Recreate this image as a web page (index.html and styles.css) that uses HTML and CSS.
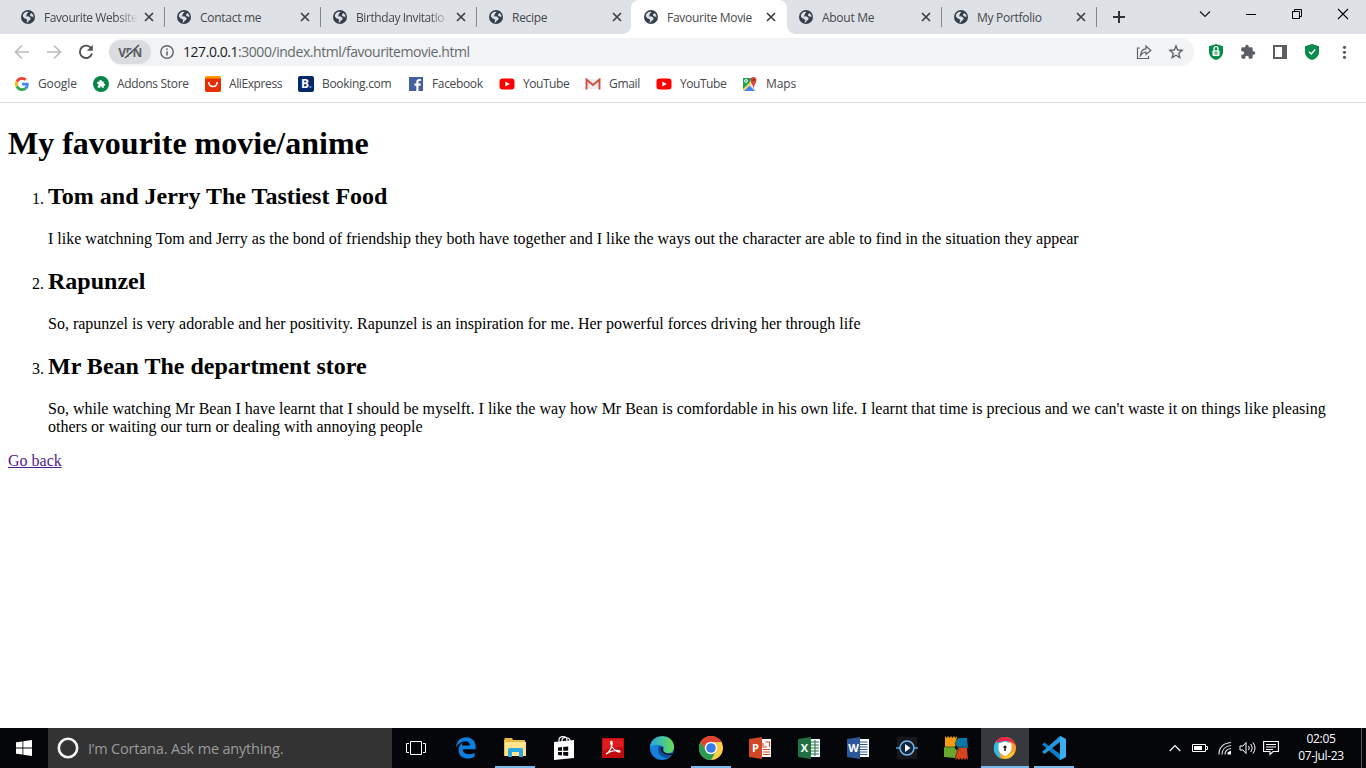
FILE: index.html
```html
<!DOCTYPE html>
<html lang="en">
<head>
<meta charset="utf-8">
<title>Favourite Movie</title>
<link rel="stylesheet" href="styles.css">
</head>
<body>
<svg class="defs" width="0" height="0">
  <symbol id="globe" viewBox="0 0 14 14"><circle cx="7" cy="7" r="7" fill="#353e4b"/><path d="M1.800 6.200C2 4 3.500 2.300 5.700 1.800L7.600 2 5.800 3.700 5.600 5.200 4.600 6.200 7.700 6.600 9.600 8 9.300 9.700 7.700 10.800 6.700 12.600 5.300 12.300 6.300 10.500 5.300 9 3.300 8.300Z" fill="#dee1e6"/><path d="M8.800 4.700 10.600 2.900 12.300 5.200 12.400 7.600 11.200 6.600 9.600 6.300Z" fill="#dee1e6"/></symbol>
  <symbol id="close" viewBox="0 0 10 10"><path d="M1 1l8 8M9 1 1 9" stroke="#3c4043" stroke-width="1.7" fill="none"/></symbol>
  <symbol id="youtube" viewBox="0 0 16 12"><rect x=".5" y=".5" width="15" height="11" rx="3" fill="#f00"/><path d="M6.300 3.500v5L10.800 6Z" fill="#fff"/></symbol>
</svg>
<div class="desktop">
  <header class="browser">
    <div class="tabs">
      <div class="tab sep"><svg class="fav"><use href="#globe"/></svg><span class="title fade">Favourite Website</span><svg class="x"><use href="#close"/></svg></div>
      <div class="tab sep"><svg class="fav"><use href="#globe"/></svg><span class="title">Contact me</span><svg class="x"><use href="#close"/></svg></div>
      <div class="tab sep"><svg class="fav"><use href="#globe"/></svg><span class="title fade">Birthday Invitatio</span><svg class="x"><use href="#close"/></svg></div>
      <div class="tab before-active"><svg class="fav"><use href="#globe"/></svg><span class="title">Recipe</span><svg class="x"><use href="#close"/></svg></div>
      <div class="tab active"><svg class="fav"><use href="#globe"/></svg><span class="title">Favourite Movie</span><svg class="x"><use href="#close"/></svg></div>
      <div class="tab sep narrow"><svg class="fav"><use href="#globe"/></svg><span class="title">About Me</span><svg class="x"><use href="#close"/></svg></div>
      <div class="tab sep narrow"><svg class="fav"><use href="#globe"/></svg><span class="title">My Portfolio</span><svg class="x"><use href="#close"/></svg></div>
      <svg class="plus" width="12" height="12"><path d="M6 0v12M0 6h12" stroke="#303236" stroke-width="2"/></svg>
      <div class="window">
        <svg width="46" height="28"><path d="M18 11.500l5 5 5-5" fill="none" stroke="#111" stroke-width="1.100"/></svg>
        <svg width="46" height="28"><path d="M18 14.500h10" stroke="#000"/></svg>
        <svg width="46" height="28"><path d="M18.500 11.500h7v7h-7zM20.500 11.500v-2h7v7h-2" fill="none" stroke="#000"/></svg>
        <svg width="46" height="28"><path d="M18 9l10 10M28 9 18 19" stroke="#000" stroke-width="1.1"/></svg>
      </div>
    </div>
    <div class="toolbar">
      <svg width="16" height="16" viewBox="0 0 16 16"><path d="M15 8H2M8 1.500 1.500 8 8 14.500" fill="none" stroke="#babcbe" stroke-width="1.7"/></svg>
      <svg width="16" height="16" viewBox="0 0 16 16"><path d="M1 8h13M8 1.500 14.500 8 8 14.500" fill="none" stroke="#babcbe" stroke-width="1.7"/></svg>
      <svg width="16" height="16" viewBox="0 0 16 16"><path d="M13.300 4.500A6.200 6.200 0 1 0 14 9.600" fill="none" stroke="#505357" stroke-width="1.9"/><path d="M14.800.8v6H8.900Z" fill="#505357"/></svg>
      <div class="omni">
        <div class="vpn"><span>VPN</span><svg width="20" height="16"><path d="M4 12.500 16.500 1" stroke="#dadce0" stroke-width="2"/><path d="M4 14 18 1" stroke="#4b4e52" stroke-width="1.500"/></svg></div>
        <svg class="info" width="14" height="14"><circle cx="7" cy="7" r="6.200" fill="none" stroke="#5f6368" stroke-width="1.400"/><path d="M7 6.200v4.300M7 3.500v1.500" stroke="#5f6368" stroke-width="1.500"/></svg>
        <span class="url"><b>127.0.0.1</b>:3000/index.html/favouritemovie.html</span>
        <svg class="share" width="16" height="16"><path d="M4 4H1.500v10.500h11V12" fill="none" stroke="#5f6368" stroke-width="1.200"/><path d="M4.500 11.500C4.800 7.200 7 5.100 10 4.900V2.200l4.800 4.300L10 10.500V8C7.500 8 6 9.200 4.500 11.500Z" fill="none" stroke="#5f6368" stroke-width="1.200"/></svg>
        <svg width="16" height="16" viewBox="0 0 16 16"><path d="M8 2l1.700 4 4.400.4-3.300 2.900 1 4.200L8 11.200l-3.800 2.300 1-4.200L1.900 6.400 6.300 6Z" fill="none" stroke="#5f6368" stroke-width="1.400"/></svg>
      </div>
      <div class="exts">
        <svg width="16" height="16" viewBox="0 0 16 16"><path d="M8 0 15 2.200V8c0 4-3 6.600-7 8-4-1.400-7-4-7-8V2.200Z" fill="#078b4b"/><rect x="4.500" y="6.300" width="7" height="5.700" rx="1" fill="#fff"/><path d="M6 6.500V4.700a2 2 0 0 1 4 0v1.800" fill="none" stroke="#fff" stroke-width="1.300"/><path d="M6.500 8.300h3M6.500 10h3" stroke="#078b4b"/></svg>
        <svg width="16" height="16" viewBox="0 0 24 24"><path d="M20.500 11H19V7a2 2 0 0 0-2-2h-4V3.500a2.500 2.500 0 0 0-5 0V5H4a2 2 0 0 0-2 2v3.800h1.500a2.700 2.700 0 0 1 0 5.400H2V20a2 2 0 0 0 2 2h3.800v-1.500a2.700 2.700 0 0 1 5.400 0V22H17a2 2 0 0 0 2-2v-4h1.500a2.500 2.500 0 0 0 0-5Z" fill="#5a5d61"/></svg>
        <svg width="16" height="16"><path d="M1 1h14v14H1zM3 3v10h7V3Z" fill="#5a5d61" fill-rule="evenodd"/></svg>
        <svg width="16" height="16" viewBox="0 0 16 16"><path d="M8 0 15 2.200V8c0 4-3 6.600-7 8-4-1.400-7-4-7-8V2.200Z" fill="#078b4b"/><path d="M5 7.700 7.300 10 11.200 5.500" fill="none" stroke="#fff" stroke-width="1.400"/></svg>
        <svg width="16" height="16"><g fill="#5a5d61"><circle cx="8.500" cy="3.300" r="1.600"/><circle cx="8.500" cy="8.300" r="1.600"/><circle cx="8.500" cy="13.300" r="1.600"/></g></svg>
      </div>
    </div>
    <nav class="bookmarks">
      <span class="bm google"><svg width="14" height="14" viewBox="0 0 48 48"><path d="M24 9.500c3.500 0 6.700 1.200 9.200 3.600l6.900-6.900C35.900 2.400 30.500 0 24 0 14.600 0 6.500 5.400 2.600 13.200l8 6.200C12.400 13.700 17.700 9.500 24 9.500" fill="#ea4335"/><path d="M47 24.500c0-1.600-.2-3.100-.4-4.500H24v9h13c-.6 3-2.300 5.500-4.800 7.200l7.700 6C44.400 38 47 31.800 47 24.500" fill="#4285f4"/><path d="M10.500 28.600a14.500 14.500 0 0 1 0-9.200l-8-6.200a24 24 0 0 0 0 21.600Z" fill="#fbbc05"/><path d="M24 48c6.500 0 11.900-2.100 15.900-5.800l-7.700-6c-2.200 1.500-4.900 2.300-8.200 2.300-6.300 0-11.600-4.200-13.500-9.900l-8 6.200C6.500 42.600 14.600 48 24 48" fill="#34a853"/></svg><span>Google</span></span>
      <span class="bm addons"><svg width="16" height="16"><circle cx="8" cy="8" r="8" fill="#078548"/><path d="M4.300 5.800h2.200c-.8-2 2.300-2.600 2.300-.5l2 .5v2c2-.6 2 2.300 0 2v2H8.900c.1-1.800-1.900-1.800-1.800 0H4.800V9.500c1.300-.2 1.300-1.800-.5-1.600Z" fill="#fff"/></svg><span>Addons Store</span></span>
      <span class="bm ali"><svg width="16" height="16"><rect width="16" height="16" rx="2" fill="#ff9900"/><path d="M0 2.500h16V14q0 2-2 2H2q-2 0-2-2Z" fill="#e62e04"/><path d="M3.700 6c.4 6 8.200 6 8.600 0" fill="none" stroke="#fff" stroke-width="1.500"/></svg><span>AliExpress</span></span>
      <span class="bm booking"><i class="b-icon">B<em>.</em></i><span>Booking.com</span></span>
      <span class="bm facebook"><svg width="14" height="14"><path d="M0 0h14v14H0Z" fill="#4460a0"/><path d="M7.300 14V8.700H5.500V6.500h1.800V5c0-2 1.200-3 3-3h1.600v2h-1.100C9.700 4 9.500 4.500 9.500 5.200v1.300h2.300l-.3 2.200h-2V14Z" fill="#fff"/></svg><span>Facebook</span></span>
      <span class="bm yt1"><svg width="16" height="12"><use href="#youtube"/></svg><span>YouTube</span></span>
      <span class="bm gmail"><svg width="16" height="12"><path d="M2 1h12v10H2Z" fill="#eee"/><path d="M1.500 11.500V1.500L8 7l6.500-5.500v10" fill="none" stroke="#d54b3d" stroke-width="1.900"/></svg><span>Gmail</span></span>
      <span class="bm yt2"><svg width="16" height="12"><use href="#youtube"/></svg><span>YouTube</span></span>
      <span class="bm maps"><svg width="16" height="16"><path d="M1 2h12v13H1Z" fill="#e3e3df"/><path d="M1 2h9L7 8 1 14Z" fill="#1fa15b"/><path d="M2 15 7.500 9.500 13 15Z" fill="#4285f4"/><path d="M1 13 10 4l1 2-9.500 9Z" fill="#ffd64f"/><path d="M11.500 12C11 8.500 8.500 7 8.500 4a3 3 0 0 1 6 0c0 3-2.500 4.500-3 8" fill="#db4437"/><circle cx="11.500" cy="4" r="1" fill="#7b231e"/><circle cx="4" cy="5" r="1.400" fill="none" stroke="#fff"/></svg><span>Maps</span></span>
    </nav>
  </header>
  <main class="page">
    <h1>My favourite movie/anime</h1>
    <ol>
      <li><h2>Tom and Jerry The Tastiest Food</h2><p>I like watchning Tom and Jerry as the bond of friendship they both have together and I like the ways out the character are able to find in the situation they appear</p></li>
      <li><h2>Rapunzel</h2><p>So, rapunzel is very adorable and her positivity. Rapunzel is an inspiration for me. Her powerful forces driving her through life</p></li>
      <li><h2>Mr Bean The department store</h2><p>So, while watching Mr Bean I have learnt that I should be myselft. I like the way how Mr Bean is comfordable in his own life. I learnt that time is precious and we can't waste it on things like pleasing<br>others or waiting our turn or dealing with annoying people</p></li>
    </ol>
    <a href="#">Go back</a>
  </main>
  <footer class="taskbar">
    <div class="start"><svg width="16" height="16"><path d="M0 2.300 6.500 1.400v6.100H0ZM7.300 1.200 16 0v7.500H7.300ZM0 8.400h6.500v6.200L0 13.700ZM7.300 8.400H16V16l-8.700-1.200Z" fill="#fff"/></svg></div>
    <div class="cortana"><svg width="22" height="22"><circle cx="11" cy="11" r="9.200" fill="none" stroke="#f2f2f2" stroke-width="2.600"/></svg><span>I’m Cortana. Ask me anything.</span></div>
    <div class="apps">
      <div class="app view"><svg width="20" height="14"><path d="M4.500.5h11v13h-11zM3 2.500H.5v9H3M17 2.500h2.500v9H17" fill="none" stroke="#fff"/></svg></div>
      <div class="app"><svg width="20" height="22"><path d="M0 10C.7 4 4.700.3 10.200.3c6 0 9.500 4.300 9.500 9.700v2.300H6.600c.3 5.500 7.800 6 12 3.400v4.100c-5.500 3.400-16 2.400-16-6.800 0-3.800 2.200-6.600 5.500-7.800-2 1-1.800 1.900-2 3.300h7.800c.2-6.400-9.300-5.600-13.900 1.500" fill="#0b80e0"/></svg></div>
      <div class="app open"><svg width="22" height="20"><path d="M1 0h7l1 2h12v16H0V2Z" fill="#e9b949"/><path d="M1 4h21v14H1Z" fill="#ffe391"/><path d="M4 19v-7q0-2 2-2h11q2 0 2 2v7h-4v-5H8v5Z" fill="#2ba8e0"/></svg></div>
      <div class="app"><svg width="22" height="24"><path d="M1 6 21 4v18L1 24Z" fill="#fff"/><path d="M6 9V4c0-4 8-5 8 0v3M9 9V4c0-4 8-3 8 1" fill="none" stroke="#fff" stroke-width="1.200"/><path d="M5 11.500l4-.4v3.700H5zM10.200 11l5-.5v4.300h-5zM5 16h4v3.500l-4-.4zM10.200 16h5v4.100l-5-.5z" fill="#080a0e"/></svg></div>
      <div class="app"><svg class="pdf" width="22" height="20"><path d="M0 0h22v20H0Z" fill="#c20b0f"/><path d="M1 1h20v8Q10 8 1 13Z" fill="#e01b1b"/><path d="M4 16c3-1 7-8 6-12-1-2-3 1 1 6 3 4 7 5 7 3.500S11 11 4 16Z" fill="none" stroke="#fff" stroke-width="1.200"/></svg></div>
      <div class="app"><svg width="24" height="24"><defs><linearGradient id="eg" x1="0" y1="0" x2="1" y2="0"><stop stop-color="#25a9e6"/><stop offset="1" stop-color="#68dd4b"/></linearGradient></defs><circle cx="12" cy="12" r="12" fill="#1680dc"/><path d="M0 11C1-2 22-4 24 10c.5 4-2 7-6 7-3 0-5-1-4-3 2-4-7-8-14-3" fill="url(#eg)"/><path d="M9 10c-3 5 1 12 8 12l5-4c-5 2-10-.5-9-5 0-2-1-3-4-3" fill="#10519b"/><path d="M13.500 10.500C10.500 15 15 18.500 22.500 17.300L24 15v4l-2 0C16 20 9 16 11 11.500Z" fill="#07101b"/></svg></div>
      <div class="app open"><svg width="24" height="24"><circle cx="12" cy="12" r="12" fill="#ffcd42"/><path d="M1.600 6A12 12 0 0 1 22.400 6H12a6 6 0 0 0-5.200 9Z" fill="#e34133"/><path d="M1.600 6A12 12 0 0 0 12 24l5.200-9A6 6 0 0 1 6.800 15Z" fill="#269b54"/><circle cx="12" cy="12" r="6.200" fill="#fff"/><circle cx="12" cy="12" r="4.800" fill="#377ce9"/></svg></div>
      <div class="app"><i class="office ppt"><b>P</b><svg width="9" height="18"><path d="M0 0h9v18H0Z" fill="#fff"/><path d="M1 4v4h4M3.500 3h4v5M1 10.500h7M1 13h7M1 15.500h7" fill="none" stroke="#d24726" stroke-width="1.100"/></svg></i></div>
      <div class="app"><i class="office xls"><b>X</b><svg width="9" height="18"><path d="M0 0h9v18H0Z" fill="#fff"/><path d="M0 3h8M0 6h8M0 9h8M0 12h8M0 15h8M4 1v16" stroke="#207245"/></svg></i></div>
      <div class="app"><i class="office doc"><b>W</b><svg width="9" height="18"><path d="M0 0h9v18H0Z" fill="#fff"/><path d="M0 3h7.500M0 5.500h7.500M0 8h7.500M0 10.500h7.500M0 13h7.500M0 15.500h7.500" stroke="#2b579a"/></svg></i></div>
      <div class="app"><svg width="24" height="24"><path d="M2 1h20v22H2Z" fill="#15171b"/><path d="M1 12h22" stroke="#5b9fe0" stroke-width="1.500"/><circle cx="12" cy="12" r="7" fill="#10243c" stroke="#77b9ed" stroke-width="1.500"/><path d="M10 8v8l5.500-4Z" fill="#fff"/></svg></div>
      <div class="app"><svg width="24" height="24"><path d="M1 0l1.500 2L4 0l1.500 2L7 0l1.500 2L10 0l1.500 2L13 0v7l-3 5-9-1Z" fill="#f59a12"/><path d="M14 2l9 0 1 10-10 0-3-4Z" fill="#0878a9"/><path d="M0 11h10l4 5-3 6-11-1Z" fill="#66a72c"/><path d="M14 12h9l1 12-1.500-2-1.500 2-1.500-2-1.500 2-1.500-2-1.500 2-1.500-2-2 2V18Z" fill="#d7431e"/><path d="M13 2 11 8l4 4-4 10M0 11h24" fill="none" stroke="#31401e" stroke-width=".7"/></svg></div>
      <div class="app open current"><svg width="24" height="24"><circle cx="12" cy="12" r="11" fill="#fb9e29"/><path d="M4 5C-2 11 1 20 8 22.500L5 12l12-6C13 2 8 2 4 5" fill="#33b9ea"/><path d="M4 4C9-1 20 0 23 10 20 6 14 3 4 7Z" fill="#ea244e"/><path d="M8 22c6 2 12 0 14-7l-7 4Z" fill="#ffc52c"/><path d="M12 5.500 18.500 7.500v4.500c0 4-3 6.500-6.500 8-3.500-1.500-6.500-4-6.500-8V7.500Z" fill="#fff"/><circle cx="12" cy="11" r="1.600" fill="#222"/><path d="M12 11v4" stroke="#222" stroke-width="1.500"/></svg></div>
      <div class="app open code"><svg width="24" height="24"><path d="M18 0 24 3v18l-6 3L0 8.500 2.500 6.500 18 18Z" fill="#087fc6"/><path d="M18 0v6L2.500 18 0 16Z" fill="#2498dc"/><path d="M18 0 24 3v18l-6 3Z" fill="#3aafee"/></svg></div>
    </div>
    <div class="tray">
      <svg width="12" height="8"><path d="M.7 7 6 1.500 11.300 7" fill="none" stroke="#fff" stroke-width="1.200"/></svg>
      <svg class="battery" width="16" height="10"><path d="M.5 1.500h13v7H.5zM14 3.500h1.500v3H14" fill="none" stroke="#fff"/><path d="M2 3h8v4H2Z" fill="#fff"/></svg>
      <svg class="wifi" width="14" height="14"><path d="M1 13.500C1 6 5.500 2.200 13 1.500M4 13.500C4 8.500 7.500 5 13 4.500M7 13.500c0-3 2-5.500 6-6" fill="none" stroke="#ddd" stroke-width="1.200"/><path d="M9.500 13.500v-2l3.500-2v4Z" fill="#fff"/></svg>
      <svg class="volume" width="18" height="14"><path d="M1 5h3l3-3.500v11L4 9H1Z" fill="none" stroke="#fff"/><path d="M9.500 5q1.500 2 0 4M11.800 3q3 4 0 8M14 1.500q4 5.500 0 11" fill="none" stroke="#fff"/></svg>
      <svg class="notes" width="16" height="16"><path d="M.6 1.500h14.800v10H10l-3 3v-3H.6ZM3 4.500h10M3 7h10M3 9.500h7" fill="none" stroke="#fff" stroke-width="1.100"/></svg>
      <div class="clock"><span>02:05</span><span>07-Jul-23</span></div>
    </div>
  </footer>
</div>
</body>
</html>
```

FILE: styles.css
```css
* { box-sizing: border-box; }
body { margin: 0; overflow: hidden; }
.defs { position: absolute; }
svg { display: block; flex: none; }
.desktop { width: 1366px; height: 768px; display: flex; flex-direction: column; background: #fff; }
.browser { height: 103px; flex: none; border-bottom: 1px solid #d8dade; font: 12px "Open Sans", "Noto Sans", sans-serif; color: #45484c; }
.tabs { height: 34px; display: flex; background: #dee1e6; padding-left: 9px; }
.tab { width: 156px; flex: none; height: 34px; display: flex; align-items: center; padding-left: 12px; position: relative; }
.tab.before-active { width: 154px; }
.tab.narrow { width: 155px; }
.tab.sep::after { content: ""; position: absolute; right: 0; top: 7px; width: 1px; height: 20px; background: #85888d; }
.tab.active { background: #fff; border-radius: 8px 8px 0 0; padding-left: 13px; }
.tab.active::before, .tab.active::after { content: ""; position: absolute; bottom: 0; width: 8px; height: 8px; }
.tab.active::before { left: -8px; background: radial-gradient(circle at 0 0, transparent 7.5px, #fff 8px); }
.tab.active::after { right: -8px; background: radial-gradient(circle at 100% 0, transparent 7.5px, #fff 8px); }
.fav { width: 14px; height: 14px; }
.title { margin-left: 9px; width: 96px; white-space: nowrap; letter-spacing: -.28px; }
.fade { letter-spacing: -.42px; -webkit-mask-image: linear-gradient(90deg, #000 76%, transparent 98%); mask-image: linear-gradient(90deg, #000 76%, transparent 98%); }
.x { width: 10px; height: 10px; margin-left: 4px; }
.active .x, .narrow .x { margin-left: 3px; }
.plus { margin: 11px 0 0 16px; }
.window { display: flex; margin-left: auto; }
.toolbar { height: 36px; display: flex; align-items: center; padding-left: 14px; gap: 16px; }
.toolbar > .omni { width: 1085px; height: 28px; border-radius: 14px; background: #f1f3f4; display: flex; align-items: center; margin-left: -1px; flex: none; }
.vpn { width: 42px; height: 24px; border-radius: 12px; background: #dadce0; display: flex; justify-content: center; align-items: center; position: relative; font-size: 12px; font-weight: 700; color: #5a5d61; letter-spacing: -.5px; }
.vpn svg { position: absolute; left: 12px; top: 4px; }
.info { margin-left: 9px; }
.url { margin-left: 9px; font-size: 14px; line-height: 18px; padding-bottom: 1px; color: #666a6e; letter-spacing: -.45px; flex: 1; }
.url b { font-weight: 400; color: #202124; }
.share { margin-right: 16px; }
.omni > svg:last-child { margin-right: 10px; }
.exts { display: flex; gap: 16px; margin-left: -2px; }
.bookmarks { height: 28px; display: flex; align-items: center; padding-left: 15px; white-space: nowrap; letter-spacing: -.3px; }
.bm { display: flex; align-items: center; gap: 9px; width: 78px; flex: none; }
.bm > span { padding-bottom: 1px; }
.google { letter-spacing: -.1px; }
.addons { width: 112px; gap: 8px; }
.ali { width: 93px; gap: 8px; letter-spacing: -.4px; }
.booking { width: 111px; gap: 8px; }
.facebook { width: 90px; letter-spacing: -.35px; }
.yt1, .yt2 { width: 86px; gap: 8px; letter-spacing: -.45px; }
.gmail { width: 71px; gap: 8px; }
.maps { gap: 8px; letter-spacing: -.1px; }
.b-icon { width: 16px; height: 16px; border-radius: 2px; background: #042769; color: #fff; font: 700 12px/16px "Open Sans", sans-serif; padding-left: 3px; }
.b-icon em { color: #23aaff; font-style: normal; }
.page { flex: 1; padding: .6px 8px 0; font: 16px/18px "Liberation Serif", "Times New Roman", serif; color: #000; overflow: hidden; }
.page h1 { font-size: 32px; line-height: 37px; margin: 21.440px 0; }
.page h2 { font-size: 24px; line-height: 27px; margin: 19.920px 0; }
.page ol { margin: 0 0 16px; padding-left: 40px; }
.page p { margin: 0; white-space: nowrap; }
.page a { color: #551a8b; }
.taskbar { height: 40px; flex: none; display: flex; background: #04060a; font-family: "Open Sans", sans-serif; }
.start { width: 48px; display: grid; place-items: center; }
.cortana { width: 344px; background: #333; display: flex; align-items: center; padding-left: 9px; gap: 9px; color: #9b9b9b; font-size: 14.500px; letter-spacing: -.18px; }
.apps { display: flex; gap: 1px; }
.app { width: 48px; display: grid; place-items: center; border-bottom: 2px solid transparent; padding-top: 2px; }
.view { margin-right: 1px; }
.open { background: linear-gradient(#76b9ed, #76b9ed) 50% 100% / 40px 2px no-repeat; background-origin: border-box; background-clip: border-box; }
.current { background-size: 48px 2px; background-color: #36393d; }
.office { width: 22px; height: 22px; display: flex; align-items: center; }
.office b { width: 13px; height: 22px; clip-path: polygon(0 2px, 100% 0, 100% 100%, 0 20px); font: 700 11px/22px "Open Sans", sans-serif; color: #fff; text-align: center; }
.ppt b { background: #d24726; }
.xls b { background: #207245; }
.doc b { background: #2b579a; }
.tray { flex: 1; display: flex; align-items: center; justify-content: flex-end; }
.battery { margin-left: 11px; }
.wifi { margin-left: 10px; }
.volume { margin-left: 7px; }
.notes { margin-left: 6px; }
.clock { width: 83px; height: 40px; border-right: 1px solid #555; margin-right: 4px; padding: 2px 0 0 2px; display: flex; flex-direction: column; align-items: center; color: #fff; font-size: 12px; line-height: 17px; letter-spacing: -.35px; }
```
